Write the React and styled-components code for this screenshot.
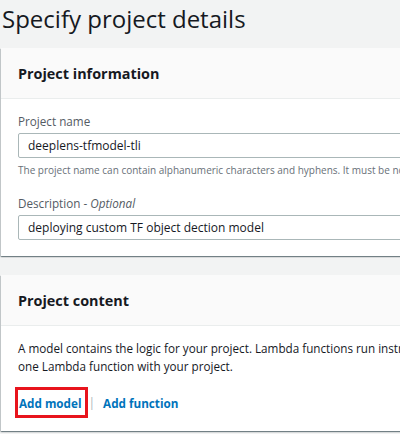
import React from "react";
import styled, { createGlobalStyle } from "styled-components";

const Global = createGlobalStyle`
  html, body { margin: 0; padding: 0; background: #f2f3f3; }
  body { font-family: "Open Sans", "Liberation Sans", Arial, sans-serif; color: #16191f; overflow: hidden; }
  * { box-sizing: border-box; }
`;

const Page = styled.div`
  width: 400px;
  height: 434px;
  overflow: hidden;
  padding: 0 0 0 1px;
`;

const Title = styled.h1`
  margin: 0;
  height: 48px;
  padding: 3px 0 0 1px;
  font-size: 24px;
  font-weight: 400;
  line-height: 32px;
  color: #16191f;
  white-space: nowrap;
`;

const Card = styled.section`
  width: 460px;
  background: #fff;
  box-shadow: 0 1px 1px 0 rgba(0, 28, 36, 0.35), 1px 1px 1px 0 rgba(0, 28, 36, 0.15),
    -1px 1px 1px 0 rgba(0, 28, 36, 0.15);
  margin-bottom: ${(p) => p.$gap || 0}px;
`;

const CardHeader = styled.div`
  height: 51px;
  background: #fafafa;
  border-bottom: 1px solid #eaeded;
  display: flex;
  align-items: center;
  padding: 0 17px;
  font-size: 14.4px;
  font-weight: 700;
  color: #16191f;
`;

const CardBody = styled.div`
  padding: ${(p) => p.$pad};
  display: flex;
  flex-direction: column;
`;

const Field = styled.div`
  display: flex;
  flex-direction: column;
  margin-bottom: ${(p) => p.$mb || 0}px;
`;

const Label = styled.label`
  font-size: 11.7px;
  line-height: 18px;
  color: #545b64;
  margin-bottom: 3px;
  white-space: nowrap;
  em { font-style: italic; }
`;

const Input = styled.div`
  height: 25px;
  border: 1px solid #aab7b8;
  border-radius: 2px;
  background: #fff;
  padding: 0 9px;
  display: flex;
  align-items: center;
  font-size: 12px;
  color: #16191f;
  white-space: nowrap;
`;

const Hint = styled.div`
  font-size: 10px;
  line-height: 14px;
  color: #687078;
  margin-top: 5px;
  white-space: nowrap;
`;

const Para = styled.p`
  margin: 0;
  font-size: 11.7px;
  line-height: 18px;
  color: #16191f;
  white-space: nowrap;
`;

const Links = styled.div`
  display: flex;
  align-items: center;
  margin-top: 12px;
  margin-left: -3px;
`;

const LinkBox = styled.span`
  display: inline-flex;
  align-items: center;
  height: 31px;
  padding: ${(p) => (p.$highlight ? "0 4px 0 1px" : "0")};
  border: ${(p) => (p.$highlight ? "3px solid #e8141d" : "none")};
`;

const Link = styled.a`
  font-size: 11.7px;
  font-weight: 700;
  color: #0073bb;
  text-decoration: none;
  white-space: nowrap;
`;

const Sep = styled.span`
  color: #aab7b8;
  font-size: 12px;
  margin: 0 8px 0 0;
`;

export default function App() {
  return (
    <>
      <Global />
      <Page>
        <Title>Specify project details</Title>
        <Card $gap={19}>
          <CardHeader>Project information</CardHeader>
          <CardBody $pad="13px 17px 16px">
            <Field $mb={17}>
              <Label>Project name</Label>
              <Input>deeplens-tfmodel-tli</Input>
              <Hint>The project name can contain alphanumeric characters and hyphens. It must be no longer than 100 characters.</Hint>
            </Field>
            <Field>
              <Label>
                Description - <em>Optional</em>
              </Label>
              <Input>deploying custom TF object dection model</Input>
            </Field>
          </CardBody>
        </Card>
        <Card>
          <CardHeader>Project content</CardHeader>
          <CardBody $pad="13px 17px 13px">
            <Para>A model contains the logic for your project. Lambda functions run instructions on the device. You can add</Para>
            <Para>one Lambda function with your project.</Para>
            <Links>
              <LinkBox $highlight>
                <Link href="#">Add model</Link>
              </LinkBox>
              <Sep>|</Sep>
              <Link href="#">Add function</Link>
            </Links>
          </CardBody>
        </Card>
      </Page>
    </>
  );
}
